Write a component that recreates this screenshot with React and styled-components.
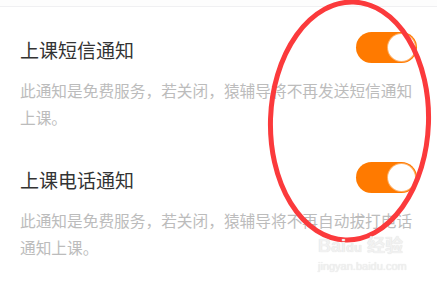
import React from "react";
import styled, { createGlobalStyle } from "styled-components";

const GlobalStyle = createGlobalStyle`
  html, body {
    margin: 0;
    padding: 0;
    background: #ffffff;
  }
  body {
    font-family: "Noto Sans CJK SC", "Noto Sans", sans-serif;
  }
`;

const settings = [
  {
    id: "sms",
    title: "上课短信通知",
    lines: ["此通知是免费服务，若关闭，猿辅导将不再发送短信通知", "上课。"],
  },
  {
    id: "call",
    title: "上课电话通知",
    lines: ["此通知是免费服务，若关闭，猿辅导将不再自动拔打电话", "通知上课。"],
  },
];

const App = () => {
  return (
    <Page>
      <GlobalStyle />
      <TopBar />
      <List>
        {settings.map((item) => (
          <Section key={item.id}>
            <Row>
              <Title>{item.title}</Title>
              <Toggle $on>
                <Knob />
              </Toggle>
            </Row>
            <Desc>
              {item.lines.map((line) => (
                <span key={line}>{line}</span>
              ))}
            </Desc>
          </Section>
        ))}
      </List>
      <Circle width="437" height="282" viewBox="0 0 437 282">
        <ellipse
          cx="349.5"
          cy="121"
          rx="79"
          ry="119"
          transform="rotate(2 349.5 121)"
          fill="none"
          stroke="#fb3a3c"
          strokeWidth="5"
        />
      </Circle>
      <Watermark>
        <Brand>
          Bai<Paw>du</Paw> 经验
        </Brand>
        <Url>jingyan.baidu.com</Url>
      </Watermark>
    </Page>
  );
};

export default App;

const Page = styled.div`
  position: relative;
  width: 437px;
  height: 282px;
  overflow: hidden;
  background: #ffffff;
`;

const TopBar = styled.div`
  height: 6px;
  background: #fdfdfd;
  border-bottom: 1px solid #f0f0f2;
`;

const List = styled.div`
  display: flex;
  flex-direction: column;
  gap: 35px;
  padding: 29px 20px 0 20px;
`;

const Section = styled.div`
  display: flex;
  flex-direction: column;
`;

const Row = styled.div`
  display: flex;
  align-items: center;
  justify-content: space-between;
  height: 27px;
`;

const Title = styled.div`
  font-size: 19px;
  line-height: 27px;
  color: #333333;
`;

const Toggle = styled.div`
  display: flex;
  align-items: center;
  justify-content: ${(p) => (p.$on ? "flex-end" : "flex-start")};
  box-sizing: border-box;
  width: 61px;
  height: 31px;
  padding: 0 2px;
  margin-bottom: 5px;
  border-radius: 16px;
  background: ${(p) => (p.$on ? "#ff7a00" : "#e5e5e5")};
`;

const Knob = styled.div`
  width: 27px;
  height: 27px;
  border-radius: 50%;
  background: #ffffff;
  box-shadow: 0 0 0 1px #ffb066;
`;

const Desc = styled.div`
  display: flex;
  flex-direction: column;
  margin-top: 14px;
  font-size: 15.7px;
  line-height: 27px;
  color: #bcbcbc;
  white-space: nowrap;
`;

const Circle = styled.svg`
  position: absolute;
  left: 0;
  top: 0;
  pointer-events: none;
`;

const Watermark = styled.div`
  position: absolute;
  left: 318px;
  top: 236px;
  display: flex;
  flex-direction: column;
  font-family: "Liberation Sans", "Noto Sans CJK SC", sans-serif;
  color: #f1f1f1;
  text-shadow: 0 0 1px #d8d8d8;
`;

const Brand = styled.div`
  font-size: 18px;
  font-weight: bold;
  line-height: 20px;
`;

const Paw = styled.span`
  font-size: 13px;
`;

const Url = styled.div`
  font-size: 11px;
  line-height: 14px;
  margin-top: 1px;
`;
